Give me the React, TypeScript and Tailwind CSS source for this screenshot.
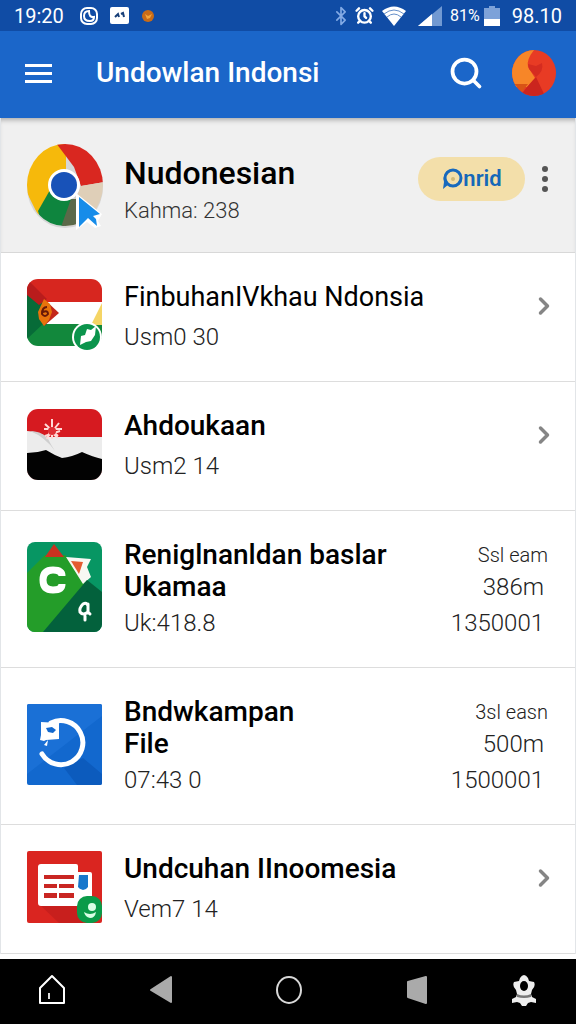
import React from 'react'
import { AlarmClock, Bluetooth, ChevronRight, Search } from 'lucide-react'

function FlagGreenIcon() {
  return (
    <svg viewBox="0 0 75 73" className="mb-1 w-[75px] shrink-0" aria-hidden="true">
      <defs>
        <clipPath id="flagGreen"><rect width="75" height="67" rx="11" /></clipPath>
      </defs>
      <g clipPath="url(#flagGreen)">
        <rect width="75" height="67" fill="#fff" />
        <path d="M0 0h75v23H0z" fill="#d7261f" />
        <path d="M0 45h75v22H0z" fill="#12883c" />
        <path d="M0 12l17 12v20L0 60z" fill="#076b38" />
        <path d="M0 0l20 20-8 6L0 16z" fill="#b91c1c" />
        <path d="M75 24v22H64z" fill="#f5d565" />
      </g>
      <path d="M17 20l15 14-15 13-5-13z" fill="#c3271b" />
      <path d="M17 20l6 5 2 8-3 8-5 6-5-7-1-7z" fill="#e8730c" />
      <path d="M20 28q-5 0-5 7 3 4 6 0 0-4-5-2" fill="none" stroke="#671808" strokeWidth="2" />
      <circle cx="60" cy="58" r="15" fill="#fff" />
      <circle cx="60" cy="58" r="13" fill="#0b944c" />
      <path d="M53 66l1-9 4-1 2-6 4 1 5-4-1 9-4 6-5 1z" fill="#fff" />
    </svg>
  )
}

function FlagBlackIcon() {
  return (
    <svg viewBox="0 0 75 71" className="mb-1 w-[75px] shrink-0" aria-hidden="true">
      <defs>
        <clipPath id="flagBlack"><rect width="75" height="71" rx="11" /></clipPath>
      </defs>
      <g clipPath="url(#flagBlack)">
        <rect width="75" height="71" fill="#d61a20" />
        <path d="M0 22q10 0 20 6h55v43H0z" fill="#ececec" />
        <path d="M3 22q10 0 17 6 4 8 8 14-10-14-25-20z" fill="#cfcfcf" />
        <path d="M0 44q10 0 19-3 8 5 16 8 10-1 20-6 11 5 20 7v21H0z" fill="#020202" />
      </g>
      <path d="M25 10v20M18 15l13 12M32 14l-12 15M17 20h18M18 27l15-5M20 30l3-8 8 7" fill="none" stroke="#ffd9d6" strokeWidth="2" />
      <circle cx="25" cy="22" r="4" fill="#df3036" />
    </svg>
  )
}

function GreenCardIcon() {
  return (
    <svg viewBox="0 0 75 90" className="mb-1 w-[75px] shrink-0" aria-hidden="true">
      <defs>
        <clipPath id="greenCard"><rect width="75" height="90" rx="8" /></clipPath>
      </defs>
      <g clipPath="url(#greenCard)">
        <rect width="75" height="90" fill="#079663" />
        <path d="M0 31L18 13h20l26 30-48 47H0z" fill="#249d29" />
        <path d="M18 15L27 2l10 13z" fill="#c93220" />
        <path d="M39 15l25 2-4 8 4 10-8 7z" fill="#f8f8f3" />
        <path d="M44 19l12 1-4 12z" fill="#e45c32" />
        <path d="M60 38l15 12v40H16z" fill="#03613c" />
      </g>
      <path d="M35 34q0-6-9-6-10 0-10 10t10 10q9 0 9-6" fill="none" stroke="#fff" strokeWidth="7" />
      <path d="M61 64q-1-4-5-2-4 4-3 8 3 4 8 0l2 2M61 62v9M58 74v4" fill="none" stroke="#fff" strokeWidth="3" strokeLinecap="round" />
    </svg>
  )
}

function BlueSwirlIcon() {
  return (
    <svg viewBox="0 0 75 81" className="mb-1 w-[75px] shrink-0" aria-hidden="true">
      <rect width="75" height="81" rx="2" fill="#1268ce" />
      <path d="M0 2q0-2 2-2h71q2 0 2 2v10L0 70z" fill="#1a70d6" />
      <path d="M37 64l19-10 19 16v9q0 2-2 2H50z" fill="#0c5bbd" />
      <path d="M24 19A22 22 0 1 1 15 50" fill="none" stroke="#fff" strokeWidth="5" strokeLinecap="round" />
      <path d="M14 18l18 1v16l-13 1-2 1-4-1 1-5z" fill="#fff" />
      <path d="M19 24l6-1 4 3-3 3-5-1z" fill="#1268ce" />
      <path d="M21 36l-1 6-3-1z" fill="#fff" />
    </svg>
  )
}

function NewsIcon() {
  return (
    <svg viewBox="0 0 75 72" className="mb-1 w-[75px] shrink-0" aria-hidden="true">
      <rect width="75" height="72" rx="2" fill="#da2520" />
      <path d="M13 54h43v18H32z" fill="#c81f1d" />
      <path d="M14 13h35q2 0 2 2v6h12q2 0 2 2v32H14q-3 0-3-3V16q0-3 3-3z" fill="#fff" />
      <path d="M17 24h30v4H17zM17 33h13v4H17zM32 33h15v4H32zM17 42h13v5H17zM32 42h15v5H32z" fill="#c92622" />
      <path d="M52 24h9v12q-2 3-5 3-4-1-5-3z" fill="#1677cc" />
      <rect x="50" y="45" width="25" height="27" rx="10" fill="#0a9b49" />
      <circle cx="65" cy="56" r="4" fill="#d9ffe5" />
      <path d="M57 61q6 4 12 0-1 6-6 6-5-1-6-6z" fill="#d9ffe5" />
    </svg>
  )
}

function ChromeIcon() {
  return (
    <svg viewBox="0 0 78 88" className="w-[78px] shrink-0" aria-hidden="true">
      <defs>
        <clipPath id="chromeRound"><ellipse cx="39" cy="42" rx="38" ry="41" /></clipPath>
      </defs>
      <ellipse cx="39" cy="44" rx="38" ry="41" fill="#d6d6d6" />
      <g clipPath="url(#chromeRound)">
        <path d="M0 0h40v43L12 72 0 48z" fill="#f6b90b" />
        <path d="M30 0h48v39l-23 4-7-19z" fill="#d92720" />
        <path d="M55 43l23-4v44H36z" fill="#dfcfb8" />
        <path d="M12 68l12-21 25 10-13 30H18z" fill="#0e853e" />
        <path d="M45 56h8v28H35z" fill="#5b6949" />
      </g>
      <circle cx="38" cy="42" r="16" fill="#fff" />
      <circle cx="38" cy="42" r="13" fill="#1852b8" />
      <path d="M50 50v37l11-8 8 6 6-2-3-5 4-7z" fill="#fff" />
      <path d="M53 54v30l9-9 9 8-1-7-3-3 7-2z" fill="#168ce9" />
    </svg>
  )
}

const items = [
  { title: ['FinbuhanIVkhau Ndonsia'], size: 'text-[27px] font-normal', detail: 'Usm0 30', Icon: FlagGreenIcon },
  { title: ['Ahdoukaan'], size: 'text-[28px] font-medium', detail: 'Usm2 14', Icon: FlagBlackIcon },
  { title: ['Reniglnanldan baslar', 'Ukamaa'], size: 'text-[28px] font-medium', detail: 'Uk:418.8', Icon: GreenCardIcon, meta: ['Ssl eam', '386m', '1350001'] },
  { title: ['Bndwkampan', 'File'], size: 'text-[28px] font-medium', detail: '07:43 0', Icon: BlueSwirlIcon, meta: ['3sl easn', '500m', '1500001'] },
  { title: ['Undcuhan IInoomesia'], size: 'text-[28px] font-medium', detail: 'Vem7 14', Icon: NewsIcon },
]

function StatusBar() {
  return (
    <div className="flex h-[31px] items-center justify-between bg-[#104ca5] px-[14px] text-[20px] leading-7 text-white">
      <div className="flex items-center">
        <span>19:20</span>
        <svg viewBox="0 0 18 18" className="ml-4 w-[18px]" aria-hidden="true">
          <rect x="1" y="1" width="16" height="16" rx="6" fill="none" stroke="#fff" strokeWidth="2" />
          <path d="M9 4q-5 0-5 5t6 5q4 0 4-4-5 1-5-6z" fill="none" stroke="#fff" strokeWidth="2" />
        </svg>
        <svg viewBox="0 0 19 17" className="ml-3 w-[19px]" aria-hidden="true">
          <rect width="19" height="17" rx="2" fill="#fff" />
          <path d="M5 10l3-3 1 3M11 7l2-1 1 4" fill="none" stroke="#173e78" strokeWidth="2" />
        </svg>
        <svg viewBox="0 0 14 14" className="ml-3 w-[14px]" aria-hidden="true">
          <circle cx="7" cy="7" r="6" fill="#c86b18" />
          <path d="M4 5l3 2 4-2-2 4-3 1z" fill="#f4a53a" />
        </svg>
      </div>
      <div className="flex items-center">
        <Bluetooth className="size-5 text-[#83aae5]" strokeWidth={2} />
        <AlarmClock className="ml-1 size-[19px]" strokeWidth={3} />
        <svg viewBox="0 0 24 20" className="ml-2 w-6" aria-hidden="true">
          <path d="M0 5q12-9 24 0L12 20z" fill="#fff" />
          <path d="M2 8q10-8 20 0M5 11q7-6 14 0" fill="none" stroke="#668fc9" />
        </svg>
        <svg viewBox="0 0 24 20" className="ml-3 w-6" aria-hidden="true">
          <path d="M24 0v20H0z" fill="#7199d2" />
          <path d="M14 8v12H0z" fill="#fff" />
        </svg>
        <span className="ml-2 text-[16px]">81%</span>
        <svg viewBox="0 0 16 20" className="ml-1 w-4" aria-hidden="true">
          <path d="M5 0h6v2h5v18H0V2h5z" fill="#7da2d9" />
          <path d="M0 13h16v7H0z" fill="#fff" />
        </svg>
        <span className="ml-3">98.10</span>
      </div>
    </div>
  )
}

export default function App() {
  return (
    <div className="flex min-h-screen flex-col bg-white font-['Roboto',sans-serif]">
      <StatusBar />

      <header className="flex h-[87px] items-center bg-[#1b66c9] pr-5 pb-[3px] pl-[25px] text-white">
        <button aria-label="Open menu" className="flex h-10 w-[27px] flex-col justify-center gap-[5px]">
          <span className="h-[3px] w-full bg-white" />
          <span className="h-[3px] w-full bg-white" />
          <span className="h-[3px] w-full bg-white" />
        </button>
        <h1 className="ml-11 flex-1 text-[28px] leading-9 font-medium">Undowlan Indonsi</h1>
        <button aria-label="Search">
          <Search className="size-9" strokeWidth={2.5} />
        </button>
        <button aria-label="Account" className="ml-7">
          <svg viewBox="0 0 44 46" className="w-11" aria-hidden="true">
            <defs>
              <clipPath id="avatar"><ellipse cx="22" cy="23" rx="22" ry="23" /></clipPath>
            </defs>
            <g clipPath="url(#avatar)">
              <path d="M0 0h44v46H0z" fill="#e83b24" />
              <path d="M0 0h22q-8 10-6 17l7 11-8 9H0z" fill="#f78628" />
              <path d="M2 34h14l-6 8z" fill="#d85416" />
              <path d="M24 27l9 19H8l7-9z" fill="#cb251e" />
              <path d="M16 14l8 2 6-3q2 8-6 14l-7-8z" fill="#d52c20" />
            </g>
          </svg>
        </button>
      </header>

      <main className="border-x border-[#e2e5e8]">
        <section className="flex h-[135px] items-center border-b border-[#d8d8d8] bg-[#f0f0f0] pt-1 pr-[26px] pl-[25px] shadow-[inset_0_5px_5px_-3px_#aaaaaa]">
          <ChromeIcon />
          <div className="ml-5 flex-1 pt-2">
            <h2 className="text-[32px] leading-10 font-medium text-black">Nudonesian</h2>
            <p className="text-[22px] leading-9 font-light text-[#333333]">Kahma: 238</p>
          </div>
          <div className="flex items-center pb-4">
            <button className="flex h-11 w-[107px] items-center justify-center rounded-full bg-[#f3dfaa] text-[22px] leading-7 font-semibold text-[#1668b8]">
              <svg viewBox="0 0 22 22" className="w-[22px]" aria-hidden="true">
                <circle cx="12" cy="10" r="8" fill="none" stroke="#1769bd" strokeWidth="3" />
                <path d="M7 2q-6 6-4 12l-1 7 6-5Q2 10 7 2z" fill="#1769bd" />
                <circle cx="12" cy="11" r="2" fill="#d2ba77" />
              </svg>
              <span>nrid</span>
            </button>
            <button aria-label="More options" className="ml-4 flex w-2 flex-col items-center gap-1">
              <span className="size-[6px] rounded-full bg-[#555555]" />
              <span className="size-[6px] rounded-full bg-[#555555]" />
              <span className="size-[6px] rounded-full bg-[#555555]" />
            </button>
          </div>
        </section>

        <ul>
          {items.map(({ title, size, detail, Icon, meta }) => (
            <li key={detail} className="flex items-center border-b border-[#dddddd] py-6 pr-[27px] pl-[26px]">
              <Icon />
              <div className={`ml-[22px] flex flex-1 flex-col py-1 ${meta ? 'gap-1' : 'gap-2'}`}>
                <h3 className={`leading-8 text-black ${size}`}>
                  {title.map((line) => (
                    <span key={line} className="block whitespace-nowrap">{line}</span>
                  ))}
                </h3>
                <p className="text-[24px] leading-8 font-light text-[#222222]">{detail}</p>
              </div>
              {meta ? (
                <div className="flex flex-col text-right text-[24px] leading-8 font-light text-[#222222]">
                  <span className="text-[20px] leading-8">{meta[0]}</span>
                  <span className="pr-1">{meta[1]}</span>
                  <span className="mt-1 pr-1">{meta[2]}</span>
                </div>
              ) : (
                <button aria-label={`Open ${title[0]}`} className="flex h-[58px] items-center self-start text-[#858585]">
                  <ChevronRight className="-mr-[10px] size-7" strokeWidth={3} />
                </button>
              )}
            </li>
          ))}
        </ul>
      </main>

      {/* Bottom navigation */}
      <nav className="mt-auto flex h-[65px] items-center justify-between bg-black px-[38px] pb-1">
        <button aria-label="Home">
          <svg viewBox="0 0 28 32" className="w-7" aria-hidden="true">
            <path d="M2 14L14 2l12 12v15H2z" fill="none" stroke="#fff" strokeWidth="2" strokeLinejoin="round" />
            <path d="M11 19v6" stroke="#ddd" strokeWidth="2" />
          </svg>
        </button>
        <button aria-label="Back">
          <svg viewBox="0 0 24 30" className="w-6" aria-hidden="true">
            <path d="M22 2v25L2 15z" fill="#aaa" stroke="#aaa" strokeWidth="2" strokeLinejoin="round" />
          </svg>
        </button>
        <button aria-label="Main screen" className="mx-5">
          <svg viewBox="0 0 28 30" className="w-7" aria-hidden="true">
            <ellipse cx="14" cy="15" rx="12" ry="13" fill="none" stroke="#d8d8d8" strokeWidth="2" />
          </svg>
        </button>
        <button aria-label="Recent apps">
          <svg viewBox="0 0 22 30" className="w-[22px]" aria-hidden="true">
            <path d="M2 7l18-5v26L2 22z" fill="#aaa" stroke="#aaa" strokeWidth="2" strokeLinejoin="round" />
          </svg>
        </button>
        <button aria-label="Settings">
          <svg viewBox="0 0 28 32" className="w-7" aria-hidden="true">
            <path d="M10 4q4-6 8 0l1 3 5 1q2 4-2 8l-1 4 1 3 4 2v4l-5-1-3 1-2 3h-4l-2-3-3-1-5 1v-4l4-2 1-3-1-4q-4-4-2-8l5-1z" fill="#eee" />
            <ellipse cx="14" cy="12" rx="4" ry="5" fill="#000" />
            <path d="M7 20q7 3 14 0v3q-7 2-14 0z" fill="#777" />
          </svg>
        </button>
      </nav>
    </div>
  )
}
